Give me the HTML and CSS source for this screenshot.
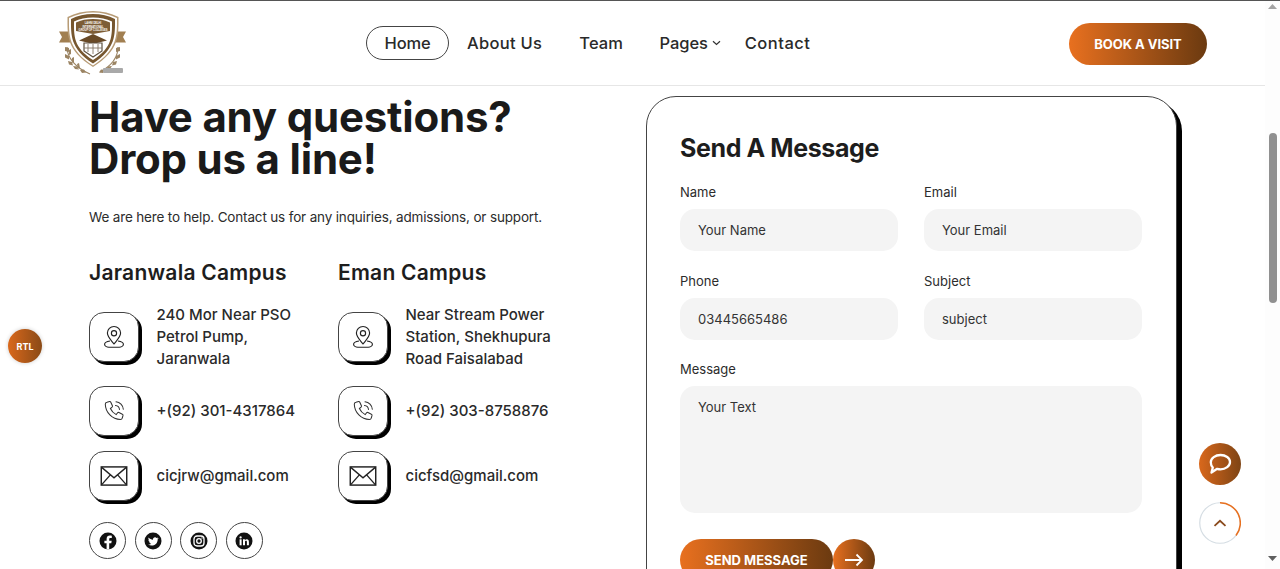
FILE: index.html
```html
<!DOCTYPE html>
<html lang="en">
<head>
<meta charset="utf-8">
<title>Contact</title>
<link rel="stylesheet" href="styles.css">
</head>
<body>
<svg class="defs" width="0" height="0">
  <defs>
    <symbol id="i-pin" viewBox="0 0 24 24"><path d="M12 1.500a6.600 6.600 0 0 0-6.600 6.600c0 3.900 3.900 7.400 6.600 10.800 2.700-3.400 6.600-6.900 6.600-10.800A6.600 6.600 0 0 0 12 1.500z" fill="none" stroke="#222" stroke-width="1.150"/><circle cx="12" cy="8.200" r="2.600" fill="none" stroke="#222" stroke-width="1.150"/><path d="M8 16c-3 .5-5.400 1.700-5.400 3.300 0 1.700 2.200 2.900 4.200 2.900h10.400c2 0 4.200-1.200 4.200-2.900 0-1.600-2.400-2.800-5.400-3.300" fill="none" stroke="#222" stroke-width="1.150"/></symbol>
    <symbol id="i-phone" viewBox="0 0 24 24"><path d="M5 3.200 7.600 2.600c.5-.1 1 .2 1.200.6l1.600 3.600c.2.500.1 1-.3 1.300L8.400 9.500c1.100 2.500 3.200 4.800 5.800 6.100l1.400-1.800c.3-.4.900-.5 1.300-.3l3.500 1.700c.5.200.7.700.6 1.200l-.7 2.600c-.2.900-1 1.500-1.900 1.500C10.300 20.300 3.500 13.500 3.300 5.200 3.300 4.200 4 3.400 5 3.200z" fill="none" stroke="#333" stroke-width="1.050"/><path d="M13.500 6.500a4.500 4.500 0 0 1 4 4M14 2.800a8 8 0 0 1 7.300 7.400" fill="none" stroke="#333" stroke-width="1.050" stroke-linecap="round"/></symbol>
    <symbol id="i-mail" viewBox="0 0 30 22"><rect x="1" y="1" width="28" height="20" fill="none" stroke="#222" stroke-width="1.600"/><path d="M1.500 1.500 15 13 28.500 1.500M1.500 20.500 11 9.800M28.500 20.500 19 9.800" fill="none" stroke="#222" stroke-width="1.500"/></symbol>
  </defs>
</svg>
<div class="window">
  <div class="page">
    <header class="header">
      <a class="logo" aria-label="College crest">
        <svg width="68" height="66" viewBox="0 0 68 66">
          <path d="M0 20.500h11v11H0l3-5.500zM67 20.500H56v11h11l-3-5.500z" fill="#a17f51"/>
          <path d="M34 0c9 0 18 2 25.500 6 0 18 1.500 33-25.500 50C7 39 8.500 24 8.500 6 16 2 25 0 34 0z" fill="#b79b75"/>
          <path d="M34 1.500c8.500 0 17 2 24 5.500 0 17 1 31.500-24 47.500C9 38.500 10 24 10 7c7-3.500 15.500-5.500 24-5.500z" fill="#fff"/>
          <path d="M34 3c8 0 15.500 1.500 22 5 0 16 1 29.500-22 44.500C11 37.500 12 24 12 8c6.500-3.500 14-5 22-5z" fill="#77572f"/>
          <path d="M34 6.500c7 0 13.500 1.300 19 4 0 14 .8 26-19 38.500C14.200 36.500 15 24.500 15 10.500c5.500-2.700 12-4 19-4z" fill="#fff"/>
          <path d="M34 8c6.500 0 12 1 17 3.500V20L34 23l-17-3v-8.500C22 9 27.500 8 34 8z" fill="#7d5d36"/>
          <path d="M20 29.500 34 23l14 6.500-14 3.500z" fill="#694a27"/>
          <path d="M25 32h18v8l-9 6-9-6z" fill="#fff" stroke="#5e5140" stroke-width="1.200"/>
          <path d="M29 33v8M34 33v10M39 33v8M25 37h18" stroke="#837766" stroke-width=".9"/>
          <text class="logo-text" x="34" y="13" text-anchor="middle">LAHNI DELHI</text>
          <text class="logo-text" x="34" y="16.500" text-anchor="middle">INTERNATIONAL</text>
          <text class="logo-text" x="34" y="20" text-anchor="middle">GROUP OF COLLEGES</text>
          <path d="M8 36c0 11 9 21 23 27M59 36c0 11-7 19-18 25" fill="none" stroke="#9b8463" stroke-width="1.100"/>
          <path d="M6 36l4 1 0 4-4-1zM6 43l4 2 0 3.500-4-2zM9 50l4 1 1 3.500-4-1zM14 55l4 .5 2 3-4-.5zM21 59l4-.5 2 3-4 .5zM12 38l-2 1 0 5 2-1zM15 46l-2 1 0 5 2-1zM20 52l-2 1 1 5 2-1zM61 36l-4 1 0 4 4-1zM61 43l-4 2 0 3.500 4-2zM58 50l-4 1-1 3.500 4-1zM53 55l-4 .5-2 3 4-.5zM46 59l-4-.5-2 3 4 .5z" fill="#9b8463"/>
          <rect x="44" y="57" width="20" height="5" rx="1" fill="#a9a9a9"/>
        </svg>
      </a>
      <nav class="nav">
        <a class="nav-link nav-home">Home</a>
        <a class="nav-link nav-about">About Us</a>
        <a class="nav-link nav-team">Team</a>
        <a class="nav-link nav-pages">Pages<svg width="9" height="6" viewBox="0 0 9 6"><path d="M1 1.200l3.500 3.300L8 1.200" fill="none" stroke="#333" stroke-width="1.200"/></svg></a>
        <a class="nav-link nav-contact">Contact</a>
      </nav>
      <a class="btn-book">BOOK A VISIT</a>
    </header>
    <main class="main">
      <section class="info">
        <h1 class="title">Have any questions?<br>Drop us a line!</h1>
        <p class="lead">We are here to help. Contact us for any inquiries, admissions, or support.</p>
        <div class="campuses">
          <div class="campus">
            <h3 class="campus-name">Jaranwala Campus</h3>
            <div class="row row-addr"><span class="ico"><svg width="24" height="24"><use href="#i-pin"/></svg></span><span class="row-text">240 Mor Near PSO Petrol Pump, Jaranwala</span></div>
            <div class="row"><span class="ico"><svg width="24" height="24"><use href="#i-phone"/></svg></span><span class="row-text">+(92) 301-4317864</span></div>
            <div class="row"><span class="ico"><svg width="28" height="20"><use href="#i-mail"/></svg></span><span class="row-text">cicjrw@gmail.com</span></div>
          </div>
          <div class="campus">
            <h3 class="campus-name">Eman Campus</h3>
            <div class="row row-addr"><span class="ico"><svg width="24" height="24"><use href="#i-pin"/></svg></span><span class="row-text">Near Stream Power Station, Shekhupura Road Faisalabad</span></div>
            <div class="row"><span class="ico"><svg width="24" height="24"><use href="#i-phone"/></svg></span><span class="row-text">+(92) 303-8758876</span></div>
            <div class="row"><span class="ico"><svg width="28" height="20"><use href="#i-mail"/></svg></span><span class="row-text">cicfsd@gmail.com</span></div>
          </div>
        </div>
        <div class="socials">
          <a class="social"><svg width="18" height="18" viewBox="0 0 18 18"><circle cx="9" cy="9" r="8.500" fill="#111"/><path d="M10.200 17.500v-6.300h2.100l.4-2.500h-2.500V7.200c0-.8.300-1.300 1.400-1.300h1.200V3.700c-.5-.1-1.200-.2-1.900-.2-2 0-3.300 1.200-3.300 3.400v1.800H5.400v2.500h2.200v6.300z" fill="#fff"/></svg></a>
          <a class="social"><svg width="18" height="18" viewBox="0 0 18 18"><circle cx="9" cy="9" r="8.500" fill="#111"/><path d="M14.200 6.300c-.4.200-.8.300-1.200.3.400-.3.800-.7.900-1.200-.4.300-.9.400-1.300.5a2.100 2.100 0 0 0-3.600 1.900c-1.700-.1-3.300-.9-4.300-2.200-.6 1-.3 2.200.6 2.800-.3 0-.6-.1-.9-.3 0 1 .7 1.900 1.700 2.100-.3.100-.6.100-.9 0 .3.900 1.100 1.400 2 1.500-.9.700-2 1-3.100.9 3.600 2.200 9.600.8 9.600-5.300.4-.3.700-.6 1-1z" fill="#fff"/></svg></a>
          <a class="social"><svg width="18" height="18" viewBox="0 0 18 18"><circle cx="9" cy="9" r="8.500" fill="#111"/><rect x="4" y="4" width="10" height="10" rx="3" fill="none" stroke="#fff" stroke-width="1.300"/><circle cx="9" cy="9" r="2.300" fill="none" stroke="#fff" stroke-width="1.300"/><circle cx="12" cy="6" r=".7" fill="#fff"/></svg></a>
          <a class="social"><svg width="18" height="18" viewBox="0 0 18 18"><circle cx="9" cy="9" r="8.500" fill="#111"/><rect x="4.600" y="7.300" width="2" height="6" fill="#fff"/><circle cx="5.600" cy="5.400" r="1.150" fill="#fff"/><path d="M8 7.300h1.900v.9c.4-.6 1-1 1.900-1 1.500 0 2.100 1 2.100 2.500v3.600h-2v-3.200c0-.8-.2-1.300-.9-1.300s-1 .5-1 1.300v3.200H8z" fill="#fff"/></svg></a>
        </div>
      </section>
      <section class="card">
        <h2 class="card-title">Send A Message</h2>
        <form class="form">
          <label class="field"><span class="label">Name</span><input class="input" placeholder="Your Name"></label>
          <label class="field"><span class="label">Email</span><input class="input" placeholder="Your Email"></label>
          <label class="field"><span class="label">Phone</span><input class="input" value="03445665486"></label>
          <label class="field"><span class="label">Subject</span><input class="input" value="subject"></label>
          <label class="field field-wide"><span class="label">Message</span><textarea class="input area" placeholder="Your Text"></textarea></label>
          <div class="send field-wide">
            <a class="btn-send">SEND MESSAGE</a>
            <a class="btn-arrow"><svg width="20" height="14" viewBox="0 0 20 14"><path d="M1 7h17M12.500 1.500 18 7l-5.500 5.500" fill="none" stroke="#fff" stroke-width="1.800"/></svg></a>
          </div>
        </form>
      </section>
    </main>
  </div>
  <div class="scrollbar">
    <svg class="sb-arrow" width="9" height="5" viewBox="0 0 9 5"><path d="M4.500 0 9 5H0z" fill="#a3a3a3"/></svg>
    <div class="sb-thumb"></div>
    <svg class="sb-arrow sb-bottom" width="9" height="5" viewBox="0 0 9 5"><path d="M0 0h9L4.500 5z" fill="#5f5f5f"/></svg>
  </div>
  <a class="float-rtl">RTL</a>
  <a class="float-chat"><svg width="26" height="24" viewBox="0 0 26 24"><path d="M13.500 3c5.200 0 9.500 3 9.500 7s-4.300 7.300-9.500 7.300c-1.200 0-2.300-.2-3.300-.5L4.500 20.500l1.300-5C4.500 14.200 3.800 12.300 3.800 10.300 3.800 6.300 8.300 3 13.500 3z" fill="none" stroke="#fff" stroke-width="2.300" stroke-linejoin="round"/></svg></a>
  <a class="float-top">
    <svg class="top-ring" width="42" height="42" viewBox="0 0 42 42"><circle cx="21" cy="21" r="20.250" fill="#fff" stroke="#d5dde3" stroke-width="1.200"/><path d="M21 .75A20.250 20.250 0 0 1 37 33.500" fill="none" stroke="#e8701f" stroke-width="1.500"/></svg>
    <svg class="top-chev" width="14" height="8" viewBox="0 0 14 8"><path d="M1.500 6.800 7 1.800l5.500 5" fill="none" stroke="#8a4a1c" stroke-width="1.800"/></svg>
  </a>
</div>
</body>
</html>
```
FILE: styles.css
```css
* { box-sizing: border-box; }
html, body { margin: 0; height: 100%; overflow: hidden; background: #fff; }
body { font-family: "Inter", "Liberation Sans", sans-serif; color: #1a1a1a; }
a { color: inherit; text-decoration: none; }
.defs { position: absolute; }

.window { position: relative; display: flex; width: 1280px; height: 569px; overflow: hidden; border-top: 1px solid #555; }
.page { width: 1265px; flex: none; }

.header { position: relative; display: flex; align-items: center; height: 85px; padding: 0 58px 0 59px; border-bottom: 1px solid #e6e6e6; }
.logo { display: block; width: 68px; height: 66px; margin-top: 1px; }
.logo svg { display: block; }
.logo-text { font-size: 2.600px; font-weight: 700; fill: #fff; font-family: "Liberation Sans", sans-serif; }

.nav { display: flex; align-items: center; margin-left: 239px; font-size: 16.500px; font-weight: 500; color: #2a2a2a; }
.nav-link { display: flex; align-items: center; letter-spacing: .1px; }
.nav-home { justify-content: center; width: 83px; height: 34px; border: 1px solid #444; border-radius: 17px; margin-right: 18px; letter-spacing: -.2px; }
.nav-about { margin-right: 37px; letter-spacing: .3px; }
.nav-team { margin-right: 36.500px; }
.nav-pages { gap: 4px; margin-right: 24px; letter-spacing: -.1px; }
.nav-contact { letter-spacing: .5px; }
.btn-book { display: flex; align-items: center; justify-content: center; width: 138px; height: 42px; margin: 1px 0 0 auto; border-radius: 21px; background: linear-gradient(90deg, #e8701f, #6b3a10); color: #fff; font-size: 13px; font-weight: 700; letter-spacing: -.05px; }

.main { display: flex; align-items: flex-start; padding: 10px 0 0 89px; }
.info { width: 557px; flex: none; }
.title { margin: 0; font-size: 42px; line-height: 42px; font-weight: 700; color: #1a1a1a; letter-spacing: -.2px; }
.lead { margin: 27px 0 0; font-size: 13.500px; line-height: 20px; color: #2c2c2c; letter-spacing: -.16px; }
.campuses { display: flex; margin-top: 33px; }
.campus { width: 249px; }
.campus-name { margin: 0 0 26px; font-size: 21px; line-height: 26px; font-weight: 600; color: #1d1d1d; letter-spacing: .25px; }
.row { display: flex; align-items: center; height: 50px; margin-bottom: 15px; }
.row-addr { margin-bottom: 24px; }
.ico { display: flex; align-items: center; justify-content: center; width: 50px; height: 50px; flex: none; border: 1px solid #444; border-radius: 15px; background: #fff; box-shadow: 3px 3px 0 #000; }
.ico svg { display: block; }
.row-text { width: 155px; margin-left: 17.500px; font-size: 15px; line-height: 22px; font-weight: 500; color: #2a2a2a; }
.socials { display: flex; gap: 8.500px; margin-top: 6px; }
.social { display: flex; align-items: center; justify-content: center; width: 37px; height: 37px; border: 1px solid #444; border-radius: 50%; }

.card { flex: none; width: 531px; height: 600px; padding: 35px 34px 0 33px; border: 1px solid #444; border-radius: 30px; background: #fff; box-shadow: 5px 5px 0 #000; }
.card-title { margin: 0 0 19px; font-size: 25px; line-height: 32px; font-weight: 700; color: #1d1d1d; letter-spacing: -.4px; }
.form { display: grid; grid-template-columns: 218px 218px; column-gap: 26px; row-gap: 20.500px; }
.field { display: block; }
.field-wide { grid-column: 1 / -1; }
.label { display: block; margin-bottom: 8px; font-size: 13px; line-height: 18px; color: #2c2c2c; }
.input { display: block; width: 100%; height: 42px; padding: 0 18px; border: 0; border-radius: 15px; background: #f4f4f4; font-family: inherit; font-size: 13px; color: #333; outline: 0; }
.input::placeholder { color: #333; opacity: 1; }
.area { height: 127px; padding-top: 12px; resize: none; line-height: 18px; }
.send { display: flex; margin-top: 5.500px; }
.btn-send { display: flex; align-items: center; justify-content: center; width: 153px; height: 42px; border-radius: 21px; background: linear-gradient(90deg, #e8701f, #6b3a10); color: #fff; font-size: 13px; font-weight: 700; }
.btn-arrow { display: flex; align-items: center; justify-content: center; width: 42px; height: 42px; border-radius: 50%; background: linear-gradient(90deg, #e8701f, #6b3a10); }

.scrollbar { position: relative; width: 15px; flex: none; background: #fdfdfd; }
.sb-arrow { position: absolute; left: 3px; top: 3px; }
.sb-bottom { top: 555px; }
.sb-thumb { position: absolute; left: 4px; top: 132px; width: 8px; height: 170px; border-radius: 4px; background: #909090; }

.float-rtl { position: absolute; left: 8px; top: 328px; display: flex; align-items: center; justify-content: center; width: 34px; height: 34px; border-radius: 50%; background: linear-gradient(90deg, #d9681c, #8a4a16); color: #fff; font-size: 9px; font-weight: 700; box-shadow: 0 0 4px rgba(0,0,0,.2); }
.float-chat { position: absolute; left: 1199px; top: 442px; display: flex; align-items: center; justify-content: center; width: 42px; height: 42px; border-radius: 50%; background: linear-gradient(90deg, #d9681c, #7e4414); }
.float-top { position: absolute; left: 1199px; top: 501px; width: 42px; height: 42px; display: flex; align-items: center; justify-content: center; }
.top-ring { position: absolute; left: 0; top: 0; }
.top-chev { position: relative; }
```
